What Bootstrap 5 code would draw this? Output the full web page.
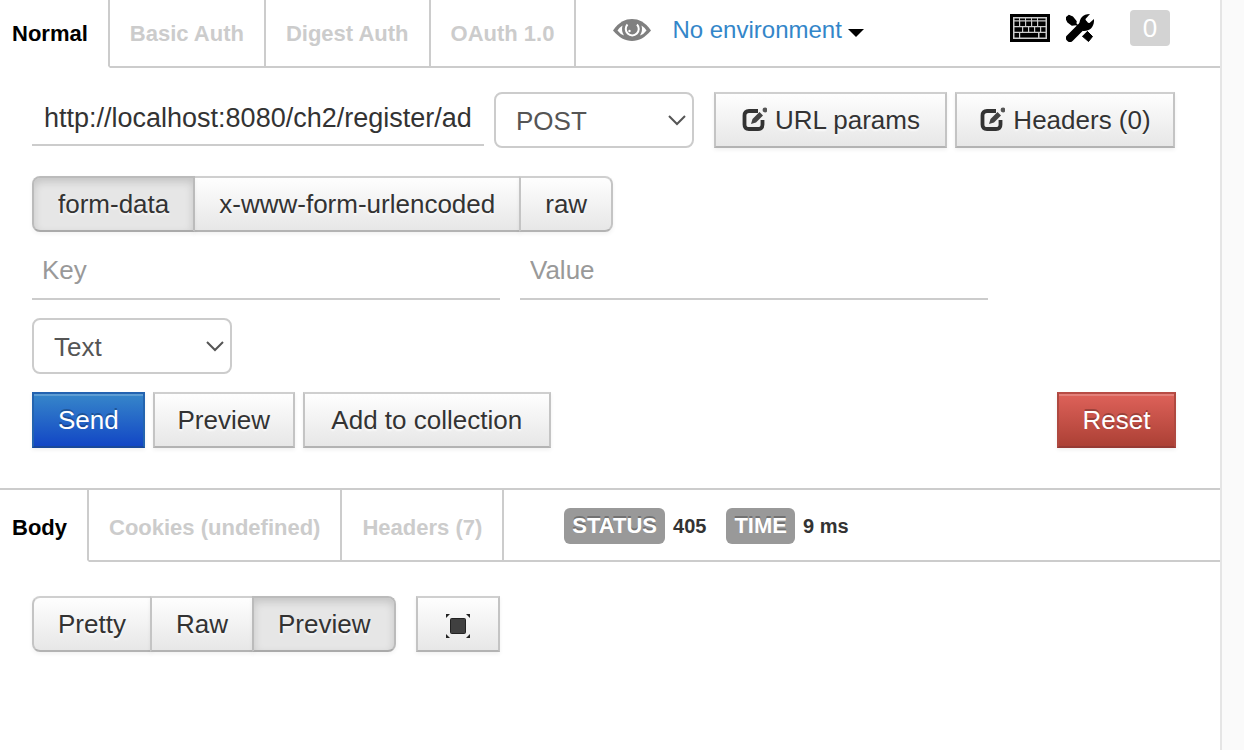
<!DOCTYPE html>
<html lang="en">
<head>
<meta charset="utf-8">
<meta name="viewport" content="width=device-width, initial-scale=1">
<title>REST client</title>
<link href="https://cdn.jsdelivr.net/npm/bootstrap@5.3.0/dist/css/bootstrap.min.css" rel="stylesheet">
<style>
body { font-family: "Liberation Sans", Arial, sans-serif; font-size: 26px; line-height: 36px; color: #333; background: #fafafa; }
.main-pane { background: #fff; border-right: 2px solid #e5e5e5; }
.side-gutter { width: 22px; }
svg { display: block; flex: none; }

/* tab strips */
.tab-strip { font-size: 22px; font-weight: bold; line-height: 32px; }
.tab-strip .nav-link { height: 100%; padding: 2px 20px 0; color: #ccc; border-right: 2px solid #ccc; border-bottom: 2px solid #ccc; display: flex; align-items: center; }
.tab-strip .nav-link.active { color: #000; padding-left: 12px; border-bottom-color: #fff; }
.response-tabs .nav-link { padding-top: 6px; }
.strip-rest { border-bottom: 2px solid #ccc; }
.request-tabs { height: 68px; }
.response-tabs { height: 74px; border-top: 2px solid #ccc; }
.request-tabs .strip-rest { padding: 0 50px 6px 36px; font-weight: normal; }
.env-menu { margin-left: 20px; font-size: 24px; line-height: 36px; }
.env-link { color: #3386c9; text-decoration: none; }
.env-link::after { color: #000; border-top-width: 8px; border-left-width: 8px; border-right-width: 8px; margin-left: 6px; vertical-align: 1px; }
.tool-icons { gap: 16px; padding-bottom: 4px; }
.count-box { width: 40px; height: 36px; margin-left: 20px; font-size: 26px; line-height: 36px; background: #d3d3d3; color: #fff; border-radius: 4px; }

/* controls */
.btn-soft { --bs-btn-font-size: 26px; --bs-btn-line-height: 36px; --bs-btn-padding-x: 24px; --bs-btn-padding-y: 8px; --bs-btn-border-width: 2px; --bs-btn-border-radius: 0; --bs-btn-color: #333; --bs-btn-hover-color: #333; --bs-btn-active-color: #333;
  border-color: #cfcfcf #c4c4c4 #b3b3b3; height: 56px; white-space: nowrap; text-shadow: 0 2px 2px rgba(255,255,255,.75);
  background: linear-gradient(#fff, #e6e6e6) border-box; box-shadow: inset 0 2px 0 rgba(255,255,255,.2), 0 2px 4px rgba(0,0,0,.06); }
.btn-soft.active { background: #e6e6e6; border-color: #bbb #bbb #aaa; box-shadow: inset 0 4px 8px rgba(0,0,0,.15), 0 2px 4px rgba(0,0,0,.05); }
.btn-soft.btn-send { color: #fff; background: linear-gradient(#3889ca, #1144c5) border-box; border-color: #2363b1 #2464af #19489a; text-shadow: 0 -2px 0 rgba(0,0,0,.25); }
.btn-soft.btn-reset { color: #fff; background: linear-gradient(#e0635b, #aa3f34) border-box; border-color: #b84c45 #af4940 #963a34; text-shadow: 0 -2px 0 rgba(0,0,0,.25); }
.pill-set .btn-soft { --bs-btn-border-radius: 8px; }
.btn-group.pill-set > .btn:not(:first-child) { margin-left: -2px; }
.edit-btn { --bs-btn-padding-x: 20px; display: flex; align-items: center; justify-content: center; gap: 8px; }
.params-btn { width: 233px; }
.headers-btn { width: 220px; }
.preview-btn, .collect-btn, .btn-reset { --bs-btn-padding-x: 20px; }
.preview-btn { width: 142px; }
.collect-btn { width: 248px; }
.btn-reset { width: 119px; }
.full-btn { width: 84px; display: flex; align-items: center; justify-content: center; padding-top: 12px; }

.line-input, .line-input:focus { height: 54px; padding: 0 12px; font-size: 26px; line-height: 36px; color: #333; border: 0; border-bottom: 2px solid #ccc; border-radius: 0; box-shadow: none; }
.line-input::placeholder { color: #999; }
.line-input.pair-input { width: 468px; padding: 0 10px 4px; }
.line-input.url-input { width: 452px; margin-right: 10px; font-size: 27px; }
.box-select { width: 200px; height: 56px; padding: 2px 40px 0 20px; font-size: 26px; line-height: 36px; color: #555; border: 2px solid #ccc; border-radius: 8px;
  background-image: url("data:image/svg+xml,%3Csvg xmlns='http://www.w3.org/2000/svg' viewBox='0 0 18 12'%3E%3Cpath d='M1 2l8 8 8-8' fill='none' stroke='%23555' stroke-width='2'/%3E%3C/svg%3E"); background-size: 18px 12px; background-position: right 6px center; }
.method-select { margin-right: 20px; }
.request-form { padding: 24px 44px 40px 32px; }
.button-row { gap: 8px; }
.type-row { margin-top: 28px; }
.pair-row { gap: 20px; margin-top: 14px; }
.next-row { margin-top: 18px; }

/* response status */
.stat-list { padding: 2px 0 0 60px; gap: 8px; }
.stat-label { font-size: 22px; line-height: 36px; color: #fff; background: #999; border-radius: 6px; padding: 0 8px; text-shadow: 0 -2px 0 rgba(0,0,0,.25); }
.stat-value { font-size: 20px; line-height: 36px; }
.stat-value + .stat-label { margin-left: 12px; }
.response-body { padding: 34px 32px; gap: 20px; }
</style>
</head>
<body>
<div class="d-flex min-vh-100">
  <main class="main-pane flex-grow-1">
    <div class="tab-strip request-tabs d-flex">
      <nav class="nav flex-nowrap text-nowrap" aria-label="Authentication">
        <a class="nav-link active" href="#normal">Normal</a>
        <a class="nav-link" href="#basic">Basic Auth</a>
        <a class="nav-link" href="#digest">Digest Auth</a>
        <a class="nav-link" href="#oauth">OAuth 1.0</a>
      </nav>
      <div class="strip-rest flex-grow-1 d-flex align-items-center">
        <svg width="40" height="24" viewBox="0 0 40 24" aria-hidden="true"><path d="M1 12.500C7 4 13 1 20 1S33 4 39 12.500C33 19.500 27 23 20 23S7 19.500 1 12.500Z" fill="#808080"/><path d="M5.500 12.500q2.500-3.500 5-5-1.500 5 1.500 10-4-1.500-6.500-5ZM34.500 12.500q-2.500-3.500-5-5 1.500 5-1.500 10 4-1.500 6.500-5Z" fill="#fff"/><path d="M15.500 6.500a6.500 6.500 0 1 0 9.500 0" fill="none" stroke="#fff" stroke-width="2"/><circle cx="17.500" cy="13" r="1.200" fill="#fff"/></svg>
        <div class="dropdown env-menu">
          <a class="env-link dropdown-toggle" href="#environment">No environment</a>
        </div>
        <div class="ms-auto d-flex align-items-center tool-icons">
          <svg width="40" height="28" viewBox="0 0 40 28" role="img" aria-label="Shortcuts"><path d="M0 0h40v28H0z"/><path d="M3 3h34v22H3z" fill="#ccc"/><path d="M4.500 4.500H9v1.700H4.500zM10 4.500h5v1.700h-5zM16 4.500h5v1.700h-5zM22 4.500h5v1.700h-5zM28 4.500h7.500v1.700H28zM4.500 7.500H9V12H4.500zM10.200 7.500H15V12h-4.800zM16.200 7.500H21V12h-4.800zM22.200 7.500H27V12h-4.800zM28.200 7.500h7.300V12h-7.300zM4.500 13.200H12v4.500H4.500zM13.200 13.200H18v4.500h-4.800zM19.200 13.200H24v4.500h-4.800zM25.200 13.200H30v4.500h-4.800zM31.200 13.200h4.300v4.500h-4.300zM4.500 19H9v4.500H4.500zM10.200 19h17.800v4.500H10.200zM29.500 19h6v4.500h-6z"/></svg>
          <svg width="28" height="28" viewBox="0 0 28 28" role="img" aria-label="Settings"><path d="M0 4 3 1.500 6.500 3 10 7.500 9.500 10.500 6 11 2 8ZM8 8l10 10" stroke="#000" stroke-width="1.500"/><path d="m15 21 5-5 6.500 6.500-4 5Z" stroke="#000"/><path d="M6 26 22 10" stroke="#fff" stroke-width="9"/><path d="M4 24 18 10" stroke="#000" stroke-width="8" stroke-linecap="round"/><path d="M13.500 12C13 5 16 0 24 0l-4.500 5 .5 3.500 3.500.5L28 5c.5 8-4 12.500-11 12Z"/></svg>
          <button type="button" class="count-box border-0 p-0">0</button>
        </div>
      </div>
    </div>

    <form class="request-form" onsubmit="return false">
      <div class="d-flex align-items-start">
        <input class="form-control line-input url-input" type="text" value="http://localhost:8080/ch2/register/add" aria-label="Request URL">
        <select class="form-select box-select method-select" aria-label="Method"><option>POST</option><option>GET</option></select>
        <div class="d-flex button-row">
          <button type="button" class="btn btn-soft edit-btn params-btn">
            <svg width="26" height="26" viewBox="0 0 26 26" aria-hidden="true"><path d="M17 4H8Q3.500 4 3.500 8.500v9Q3.500 22 8 22h9q4.500 0 4.500-4.500V13" fill="none" stroke="#333" stroke-width="3.800"/><path d="m10 17 1.500-5 7-7 3.500 3.500-7 7Z" fill="#444"/><circle cx="24" cy="3" r="2.400" fill="#555"/></svg>URL params</button>
          <button type="button" class="btn btn-soft edit-btn headers-btn">
            <svg width="26" height="26" viewBox="0 0 26 26" aria-hidden="true"><path d="M17 4H8Q3.500 4 3.500 8.500v9Q3.500 22 8 22h9q4.500 0 4.500-4.500V13" fill="none" stroke="#333" stroke-width="3.800"/><path d="m10 17 1.500-5 7-7 3.500 3.500-7 7Z" fill="#444"/><circle cx="24" cy="3" r="2.400" fill="#555"/></svg>Headers (0)</button>
        </div>
      </div>
      <div class="btn-group pill-set type-row" role="group" aria-label="Body type">
        <button type="button" class="btn btn-soft active">form-data</button>
        <button type="button" class="btn btn-soft">x-www-form-urlencoded</button>
        <button type="button" class="btn btn-soft">raw</button>
      </div>
      <div class="d-flex pair-row">
        <input class="form-control line-input pair-input" type="text" placeholder="Key" aria-label="Key">
        <input class="form-control line-input pair-input" type="text" placeholder="Value" aria-label="Value">
      </div>
      <select class="form-select box-select next-row" aria-label="Value type"><option>Text</option><option>File</option></select>
      <div class="d-flex button-row next-row">
        <button type="submit" class="btn btn-soft btn-send">Send</button>
        <button type="button" class="btn btn-soft preview-btn">Preview</button>
        <button type="button" class="btn btn-soft collect-btn">Add to collection</button>
        <button type="reset" class="btn btn-soft btn-reset ms-auto">Reset</button>
      </div>
    </form>

    <div class="tab-strip response-tabs d-flex">
      <nav class="nav flex-nowrap text-nowrap" aria-label="Response">
        <a class="nav-link active" href="#body">Body</a>
        <a class="nav-link" href="#cookies">Cookies (undefined)</a>
        <a class="nav-link" href="#headers">Headers (7)</a>
      </nav>
      <div class="strip-rest stat-list flex-grow-1 d-flex align-items-center">
        <span class="stat-label">STATUS</span><span class="stat-value">405</span>
        <span class="stat-label">TIME</span><span class="stat-value">9 ms</span>
      </div>
    </div>
    <div class="response-body d-flex">
      <div class="btn-group pill-set" role="group" aria-label="View">
        <button type="button" class="btn btn-soft">Pretty</button>
        <button type="button" class="btn btn-soft">Raw</button>
        <button type="button" class="btn btn-soft active">Preview</button>
      </div>
      <button type="button" class="btn btn-soft full-btn" aria-label="Full screen">
        <svg width="24" height="24" viewBox="0 0 24 24" aria-hidden="true"><rect x="4.500" y="4.500" width="15" height="15" rx="1" fill="#404040" stroke="#222"/><path d="M0 0h4L0 4ZM24 0v4l-4-4ZM0 24v-4l4 4ZM24 24h-4l4-4Z" fill="#222"/></svg>
      </button>
    </div>
  </main>
  <aside class="side-gutter flex-shrink-0" aria-label="Sidebar"></aside>
</div>
<script src="https://cdn.jsdelivr.net/npm/bootstrap@5.3.0/dist/js/bootstrap.bundle.min.js"></script>
</body>
</html>
